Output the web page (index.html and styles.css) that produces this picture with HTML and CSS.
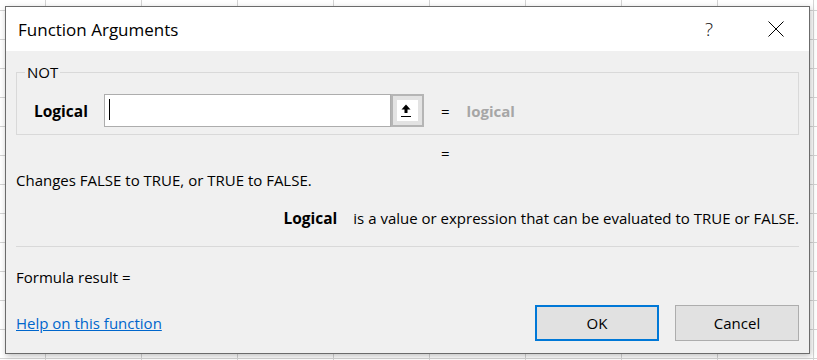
FILE: index.html
```html
<!DOCTYPE html>
<html lang="en">
<head>
<meta charset="utf-8">
<title>Function Arguments</title>
<link rel="stylesheet" href="styles.css">
</head>
<body>
<div class="dialog">
  <div class="titlebar">
    <span class="title">Function Arguments</span>
    <span class="help">?</span>
    <span class="close">
      <svg width="16" height="16" viewBox="0 0 16 16"><path d="M0.5 0.5 L15.5 15.5 M15.5 0.5 L0.5 15.5" stroke="#000" stroke-width="1" fill="none"/></svg>
    </span>
  </div>
  <div class="body">
    <fieldset class="group">
      <legend class="group-title">NOT</legend>
      <div class="arg-row">
        <span class="arg-label">Logical</span>
        <div class="arg-input"><span class="caret"></span></div>
        <span class="ref-btn">
          <span class="ref-icon">
            <svg width="21" height="21" viewBox="0 0 21 21"><path d="M9 4.5 L4.5 9.5 L13.5 9.5 Z" fill="#000"/><rect x="7.5" y="9" width="3" height="4" fill="#000"/><rect x="4" y="16" width="10" height="1" fill="#000"/></svg>
          </span>
        </span>
        <span class="eq">=</span>
        <span class="arg-hint">logical</span>
      </div>
    </fieldset>
    <div class="result-eq">=</div>
    <p class="desc">Changes FALSE to TRUE, or TRUE to FALSE.</p>
    <p class="arg-desc"><b class="arg-name">Logical</b>is a value or expression that can be evaluated to TRUE or FALSE.</p>
    <div class="sep"></div>
    <p class="formula">Formula result =</p>
    <div class="footer">
      <a class="help-link" href="#">Help on this function</a>
      <div class="buttons">
        <span class="btn btn-ok">OK</span>
        <span class="btn">Cancel</span>
      </div>
    </div>
  </div>
</div>
</body>
</html>
```

FILE: styles.css
```css
html, body {
  margin: 0;
  padding: 0;
}
body {
  width: 817px;
  height: 360px;
  overflow: hidden;
  background-color: #ffffff;
  background-image:
    linear-gradient(to right, #d4d4d4 1px, transparent 1px),
    linear-gradient(to bottom, #d4d4d4 1px, transparent 1px);
  background-size: 96px 29px, 96px 29px;
  background-position: 45px 10px, 45px 10px;
  font-family: "Open Sans", "Noto Sans", sans-serif;
  font-size: 15px;
  color: #000;
  display: flow-root;
}
.dialog {
  margin: 6px 0 0 5px;
  width: 805px;
  height: 348px;
  box-sizing: border-box;
  border: 1px solid #6b6b6b;
  box-shadow: 1px 2px 6px rgba(0,0,0,0.25);
  background: #f0f0f0;
  display: flex;
  flex-direction: column;
}
.titlebar {
  height: 44px;
  background: #fff;
  display: flex;
  align-items: center;
  flex: none;
}
.title {
  flex: 1;
  padding-left: 12px;
  font-size: 17px;
  color: #000;
}
.help {
  width: 46px;
  text-align: center;
  font-size: 19px;
  font-weight: 300;
  color: #111;
  margin-right: -1px;
}
.close {
  width: 46px;
  margin-left: 22px;
  margin-right: 10px;
  display: flex;
  justify-content: center;
}
.close svg { display: block; }
.body {
  flex: 1;
  padding: 0 10px;
  display: flex;
  flex-direction: column;
}
.group {
  margin: 13px 0 0 0;
  padding: 0 0 7px 0;
  border: 1px solid #d9d9d9;
  min-width: 0;
}
.group-title {
  margin-left: 8px;
  padding: 0 2px;
  line-height: 16px;
  font-size: 15px;
}
.arg-row {
  margin-top: 14px;
  display: flex;
  align-items: center;
  padding-left: 17px;
}
.arg-label {
  width: 70px;
  font-weight: 700;
  font-size: 15.5px;
}
.arg-input {
  width: 287px;
  height: 33px;
  box-sizing: border-box;
  border: 1px solid #adadad;
  background: #fff;
  padding: 4px 0 0 4px;
}
.caret {
  display: block;
  width: 1px;
  height: 21px;
  background: #000;
}
.ref-btn {
  width: 33px;
  height: 33px;
  box-sizing: border-box;
  border: 2px solid #b5b5b5;
  background: #e3e3e3;
  display: flex;
  align-items: center;
  justify-content: center;
}
.ref-icon {
  width: 21px;
  height: 21px;
  background: #fff;
  display: block;
}
.ref-icon svg { display: block; }
.eq {
  margin-left: 17px;
}
.arg-hint {
  margin-left: 17px;
  font-weight: 700;
  color: #a6a6a6;
}
.result-eq {
  margin: 8px 0 0 425px;
  line-height: 20px;
}
.desc {
  margin: 7px 0 0 0;
  line-height: 20px;
}
.arg-desc {
  margin: 18px 0 0 0;
  line-height: 20px;
  text-align: right;
}
.arg-name {
  font-weight: 700;
  font-size: 15.5px;
  margin-right: 16px;
}
.sep {
  margin-top: 18px;
  height: 1px;
  background: #d9d9d9;
}
.formula {
  margin: 20px 0 0 0;
  line-height: 20px;
}
.footer {
  margin-top: 18px;
  display: flex;
  align-items: center;
  justify-content: space-between;
}
.help-link {
  color: #0066cc;
  text-decoration: underline;
}
.buttons {
  display: flex;
  gap: 16px;
}
.btn {
  width: 124px;
  height: 36px;
  box-sizing: border-box;
  border: 1px solid #adadad;
  background: #e1e1e1;
  display: flex;
  align-items: center;
  justify-content: center;
}
.btn-ok {
  border: 2px solid #0078d7;
}
```
